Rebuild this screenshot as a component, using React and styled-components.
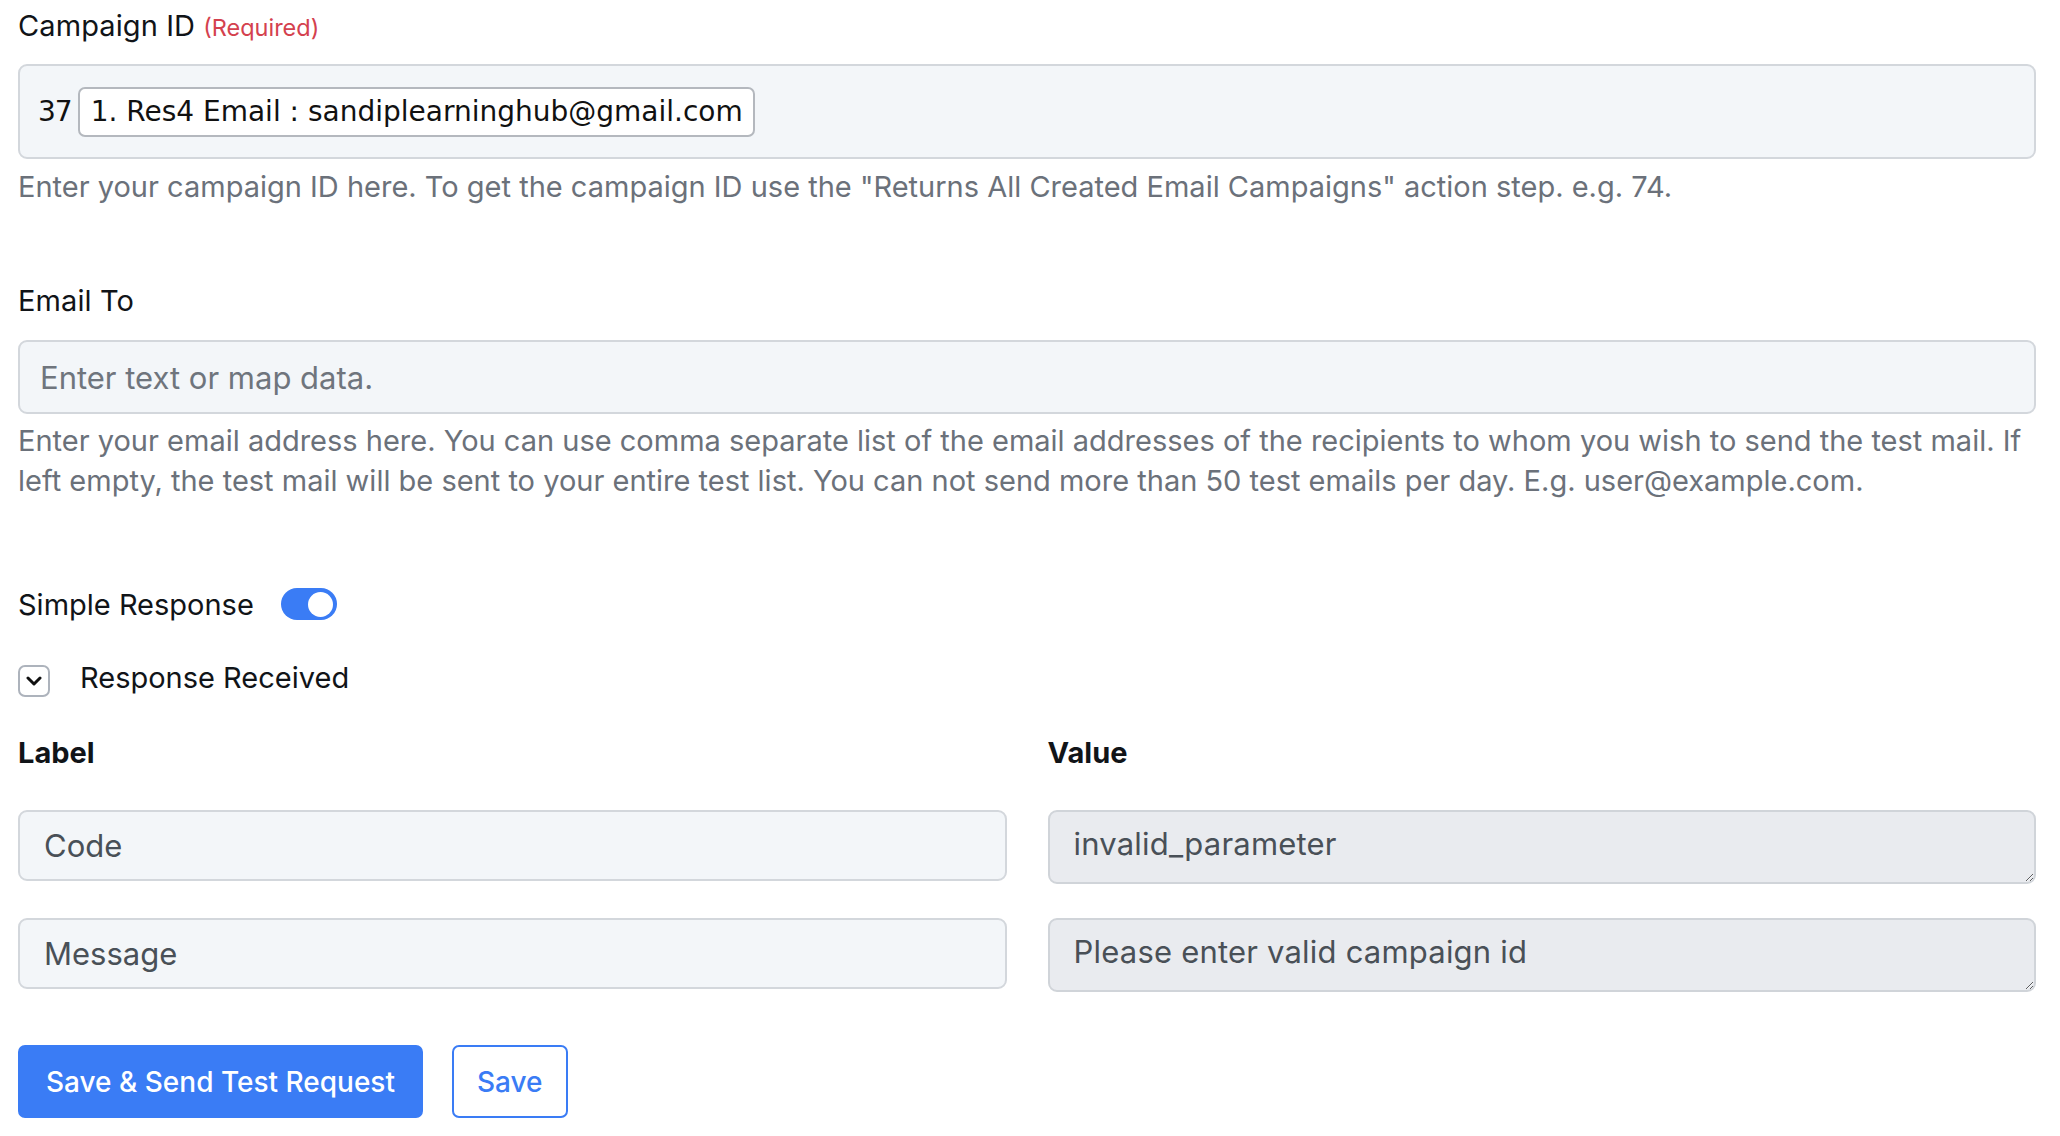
import React from "react";
import styled, { createGlobalStyle } from "styled-components";

const Global = createGlobalStyle`
  html, body { margin: 0; padding: 0; background: #ffffff; }
  body { font-family: Inter, "Noto Sans", sans-serif; color: #111418; }
  * { box-sizing: border-box; }
`;

const Page = styled.div`
  width: 2060px;
  padding: 8px 24px 0 18px;
`;

const Field = styled.section`
  display: flex;
  flex-direction: column;
  margin-bottom: ${(p) => p.$mb || 0}px;
`;

const FieldLabel = styled.label`
  display: flex;
  align-items: baseline;
  gap: 8px;
  height: 36px;
  font-size: 29px;
  line-height: 36px;
  letter-spacing: 0.1px;
  color: #111418;
  margin-bottom: ${(p) => p.$mb ?? 20}px;
`;

const Required = styled.span`
  font-size: 23.5px;
  letter-spacing: 0;
  color: #d4414e;
`;

const TagBox = styled.div`
  height: 95px;
  display: flex;
  align-items: center;
  gap: 6px;
  padding: 0 18px;
  background: #f3f6f9;
  border: 2px solid #d3d7dc;
  border-radius: 9px;
  font-family: "DejaVu Sans", Verdana, sans-serif;
  font-size: 28px;
  color: #111;
`;

const Prefix = styled.span`
  letter-spacing: -1px;
`;

const Chip = styled.span`
  height: 50px;
  display: inline-flex;
  align-items: center;
  padding: 0 10px 0 11px;
  background: #fff;
  border: 2px solid #b4b8be;
  border-radius: 7px;
  white-space: nowrap;
`;

const Help = styled.p`
  margin: ${(p) => p.$mt || 8}px 0 0;
  font-size: 29px;
  line-height: 40px;
  color: #6b717a;
`;

const TextInput = styled.input`
  width: 100%;
  height: ${(p) => p.$h || 71}px;
  padding: 0 ${(p) => p.$px || 24}px;
  background: #f3f6f9;
  border: 2px solid #d3d7dc;
  border-radius: 9px;
  font-family: Inter, "Noto Sans", sans-serif;
  font-size: 31px;
  color: #495057;
  outline: none;
  &::placeholder { color: #6f757d; }
`;

const TextArea = styled.textarea`
  display: block;
  width: 100%;
  height: 74px;
  padding: 12px 24px;
  background: #e9ebef;
  border: 2px solid #d0d4d9;
  border-radius: 9px;
  font-family: Inter, "Noto Sans", sans-serif;
  font-size: 31px;
  line-height: 40px;
  letter-spacing: 0.2px;
  color: #495057;
  resize: vertical;
  outline: none;
  overflow: hidden;
`;

const ToggleRow = styled.div`
  display: flex;
  align-items: center;
  gap: 27px;
  height: 36px;
  font-size: 29px;
  margin-bottom: 42px;
`;

const Switch = styled.span`
  width: 56px;
  height: 32px;
  border-radius: 16px;
  background: #3a7cf5;
  display: inline-flex;
  align-items: center;
  justify-content: flex-end;
  padding: 0 4px;
  &::after {
    content: "";
    width: 25px;
    height: 25px;
    border-radius: 50%;
    background: #fff;
  }
`;

const CollapseRow = styled.div`
  display: flex;
  align-items: center;
  gap: 30px;
  height: 34px;
  font-size: 29px;
  margin-bottom: 37px;
`;

const CollapseTitle = styled.span`
  line-height: 34px;
  padding-bottom: 6px;
`;

const ChevronBox = styled.span`
  width: 32px;
  height: 32px;
  border: 2px solid #adb3bc;
  border-radius: 7px;
  display: inline-flex;
  align-items: center;
  justify-content: center;
`;

const Grid = styled.div`
  display: grid;
  grid-template-columns: 1fr 1fr;
  column-gap: 41px;
  row-gap: ${(p) => p.$rg || 0}px;
  align-items: start;
`;

const ColHead = styled.div`
  font-size: 29px;
  line-height: 36px;
  font-weight: 700;
  margin-bottom: 39px;
`;

const Actions = styled.div`
  display: flex;
  gap: 29px;
  margin-top: 53px;
`;

const Button = styled.button`
  height: 73px;
  padding: 0 ${(p) => (p.$primary ? 26 : 23)}px;
  border-radius: 7px;
  border: 2px solid #3a7cf5;
  background: ${(p) => (p.$primary ? "#3a7cf5" : "#fff")};
  color: ${(p) => (p.$primary ? "#fff" : "#3a7cf5")};
  font-family: Inter, "Noto Sans", sans-serif;
  font-size: 28px;
  font-weight: 500;
  cursor: pointer;
`;

const Chevron = () => (
  <svg width="16" height="10" viewBox="0 0 16 10" fill="none">
    <path d="M2 2l6 6 6-6" stroke="#111" strokeWidth="3" strokeLinecap="round" strokeLinejoin="round" />
  </svg>
);

export default function App() {
  return (
    <>
      <Global />
      <Page>
        <Field $mb={76}>
          <FieldLabel>
            Campaign ID <Required>(Required)</Required>
          </FieldLabel>
          <TagBox>
            <Prefix>37</Prefix>
            <Chip>1. Res4 Email : sandiplearninghub@gmail.com</Chip>
          </TagBox>
          <Help>
            Enter your campaign ID here. To get the campaign ID use the "Returns All Created Email Campaigns" action step. e.g. 74.
          </Help>
        </Field>

        <Field $mb={85}>
          <FieldLabel $mb={21}>Email To</FieldLabel>
          <TextInput $h={74} $px={20} placeholder="Enter text or map data." />
          <Help $mt={7}>
            Enter your email address here. You can use comma separate list of the email addresses of the recipients to whom you wish to send the test mail. If left empty, the test mail will be sent to your entire test list. You can not send more than 50 test emails per day. E.g. user@example.com.
          </Help>
        </Field>

        <ToggleRow>
          <span>Simple Response</span>
          <Switch role="switch" aria-checked="true" />
        </ToggleRow>

        <CollapseRow>
          <ChevronBox>
            <Chevron />
          </ChevronBox>
          <CollapseTitle>Response Received</CollapseTitle>
        </CollapseRow>

        <Grid>
          <ColHead>Label</ColHead>
          <ColHead>Value</ColHead>
        </Grid>
        <Grid $rg={34}>
          <TextInput readOnly value="Code" />
          <TextArea readOnly value="invalid_parameter" />
          <TextInput readOnly value="Message" />
          <TextArea readOnly value="Please enter valid campaign id" />
        </Grid>

        <Actions>
          <Button $primary>Save &amp; Send Test Request</Button>
          <Button>Save</Button>
        </Actions>
      </Page>
    </>
  );
}
